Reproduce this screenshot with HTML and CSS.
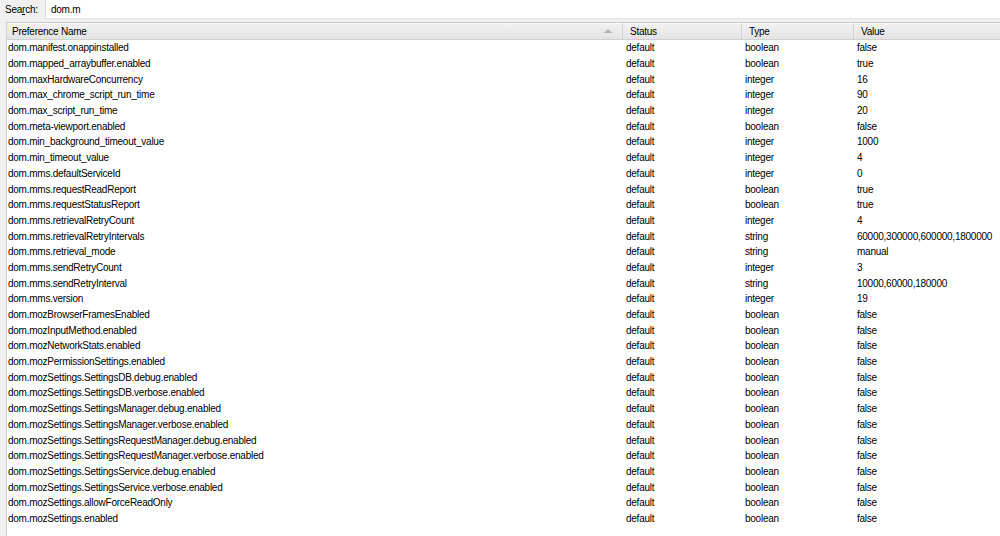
FILE: index.html
```html
<!DOCTYPE html>
<html>
<head>
<meta charset="utf-8">
<link rel="stylesheet" href="styles.css">
</head>
<body>
<div class="searchbar">
  <label class="search-label">Sea<u>r</u>ch:</label>
  <div class="search-input">dom.m</div>
</div>
<div class="tree">
  <div class="head">
    <div class="hcell c1">Preference Name<span class="sort"></span></div>
    <div class="hcell c2">Status</div>
    <div class="hcell c3">Type</div>
    <div class="hcell c4">Value</div>
  </div>
  <div class="rows" id="rows">
    <div class="row"><span class="c1">dom.manifest.onappinstalled</span><span class="c2">default</span><span class="c3">boolean</span><span class="c4">false</span></div>
    <div class="row"><span class="c1">dom.mapped_arraybuffer.enabled</span><span class="c2">default</span><span class="c3">boolean</span><span class="c4">true</span></div>
    <div class="row"><span class="c1">dom.maxHardwareConcurrency</span><span class="c2">default</span><span class="c3">integer</span><span class="c4">16</span></div>
    <div class="row"><span class="c1">dom.max_chrome_script_run_time</span><span class="c2">default</span><span class="c3">integer</span><span class="c4">90</span></div>
    <div class="row"><span class="c1">dom.max_script_run_time</span><span class="c2">default</span><span class="c3">integer</span><span class="c4">20</span></div>
    <div class="row"><span class="c1">dom.meta-viewport.enabled</span><span class="c2">default</span><span class="c3">boolean</span><span class="c4">false</span></div>
    <div class="row"><span class="c1">dom.min_background_timeout_value</span><span class="c2">default</span><span class="c3">integer</span><span class="c4">1000</span></div>
    <div class="row"><span class="c1">dom.min_timeout_value</span><span class="c2">default</span><span class="c3">integer</span><span class="c4">4</span></div>
    <div class="row"><span class="c1">dom.mms.defaultServiceId</span><span class="c2">default</span><span class="c3">integer</span><span class="c4">0</span></div>
    <div class="row"><span class="c1">dom.mms.requestReadReport</span><span class="c2">default</span><span class="c3">boolean</span><span class="c4">true</span></div>
    <div class="row"><span class="c1">dom.mms.requestStatusReport</span><span class="c2">default</span><span class="c3">boolean</span><span class="c4">true</span></div>
    <div class="row"><span class="c1">dom.mms.retrievalRetryCount</span><span class="c2">default</span><span class="c3">integer</span><span class="c4">4</span></div>
    <div class="row"><span class="c1">dom.mms.retrievalRetryIntervals</span><span class="c2">default</span><span class="c3">string</span><span class="c4">60000,300000,600000,1800000</span></div>
    <div class="row"><span class="c1">dom.mms.retrieval_mode</span><span class="c2">default</span><span class="c3">string</span><span class="c4">manual</span></div>
    <div class="row"><span class="c1">dom.mms.sendRetryCount</span><span class="c2">default</span><span class="c3">integer</span><span class="c4">3</span></div>
    <div class="row"><span class="c1">dom.mms.sendRetryInterval</span><span class="c2">default</span><span class="c3">string</span><span class="c4">10000,60000,180000</span></div>
    <div class="row"><span class="c1">dom.mms.version</span><span class="c2">default</span><span class="c3">integer</span><span class="c4">19</span></div>
    <div class="row"><span class="c1">dom.mozBrowserFramesEnabled</span><span class="c2">default</span><span class="c3">boolean</span><span class="c4">false</span></div>
    <div class="row"><span class="c1">dom.mozInputMethod.enabled</span><span class="c2">default</span><span class="c3">boolean</span><span class="c4">false</span></div>
    <div class="row"><span class="c1">dom.mozNetworkStats.enabled</span><span class="c2">default</span><span class="c3">boolean</span><span class="c4">false</span></div>
    <div class="row"><span class="c1">dom.mozPermissionSettings.enabled</span><span class="c2">default</span><span class="c3">boolean</span><span class="c4">false</span></div>
    <div class="row"><span class="c1">dom.mozSettings.SettingsDB.debug.enabled</span><span class="c2">default</span><span class="c3">boolean</span><span class="c4">false</span></div>
    <div class="row"><span class="c1">dom.mozSettings.SettingsDB.verbose.enabled</span><span class="c2">default</span><span class="c3">boolean</span><span class="c4">false</span></div>
    <div class="row"><span class="c1">dom.mozSettings.SettingsManager.debug.enabled</span><span class="c2">default</span><span class="c3">boolean</span><span class="c4">false</span></div>
    <div class="row"><span class="c1">dom.mozSettings.SettingsManager.verbose.enabled</span><span class="c2">default</span><span class="c3">boolean</span><span class="c4">false</span></div>
    <div class="row"><span class="c1">dom.mozSettings.SettingsRequestManager.debug.enabled</span><span class="c2">default</span><span class="c3">boolean</span><span class="c4">false</span></div>
    <div class="row"><span class="c1">dom.mozSettings.SettingsRequestManager.verbose.enabled</span><span class="c2">default</span><span class="c3">boolean</span><span class="c4">false</span></div>
    <div class="row"><span class="c1">dom.mozSettings.SettingsService.debug.enabled</span><span class="c2">default</span><span class="c3">boolean</span><span class="c4">false</span></div>
    <div class="row"><span class="c1">dom.mozSettings.SettingsService.verbose.enabled</span><span class="c2">default</span><span class="c3">boolean</span><span class="c4">false</span></div>
    <div class="row"><span class="c1">dom.mozSettings.allowForceReadOnly</span><span class="c2">default</span><span class="c3">boolean</span><span class="c4">false</span></div>
    <div class="row"><span class="c1">dom.mozSettings.enabled</span><span class="c2">default</span><span class="c3">boolean</span><span class="c4">false</span></div>
  </div>
</div>
</body>
</html>
```
FILE: styles.css
```css
html, body {
  margin: 0;
  padding: 0;
  background: #f0f0f0;
  font-family: "Liberation Sans", Arial, sans-serif;
  font-size: 10px;
  letter-spacing: -0.25px;
  color: #000;
  width: 1000px;
  height: 536px;
  overflow: hidden;
}
.searchbar {
  display: flex;
  align-items: stretch;
  height: 19px;
}
.search-label {
  width: 40px;
  padding-left: 5px;
  display: flex;
  align-items: center;
  color: #000;
}
.search-label u { text-decoration: underline; }
.search-input {
  flex: 1;
  background: #fff;
  border-left: 1px solid #d8d8d8;
  border-bottom: 1px solid #e0e0e0;
  display: flex;
  align-items: center;
  padding-left: 5px;
}
.tree {
  margin: 3px 0 0 6px;
  border-top: 1px solid #c8c8c8;
  border-left: 1px solid #d0d0d0;
  background: #fff;
  height: 520px;
}
.head {
  display: flex;
  height: 16px;
  background: linear-gradient(#f2f2f2, #e3e3e3);
  border-bottom: 1px solid #d0d0d0;
  box-shadow: inset 0 1px 0 #fafafa;
}
.hcell {
  display: flex;
  align-items: center;
  padding-left: 5px;
  padding-top: 1px;
  box-sizing: border-box;
  position: relative;
}
.hcell + .hcell {
  border-left: 1px solid #d4d4d4;
  padding-left: 7px;
}
.sort {
  position: absolute;
  right: 10px;
  top: 6px;
  width: 0;
  height: 0;
  border-left: 4px solid transparent;
  border-right: 4px solid transparent;
  border-bottom: 4px solid #b0b0b0;
}
.c1 { width: 615px; flex-shrink: 0; }
.c2 { width: 119px; flex-shrink: 0; }
.c3 { width: 112px; flex-shrink: 0; }
.c4 { flex: 1; min-width: 0; overflow: hidden; }
.rows {
  padding-top: 0;
}
.row {
  display: flex;
  height: 15.7px;
  align-items: center;
}
.row span {
  display: block;
  box-sizing: border-box;
  white-space: nowrap;
}
.row .c2, .row .c3, .row .c4 { padding-left: 4px; }
.row .c1 { padding-left: 1px; }
```
